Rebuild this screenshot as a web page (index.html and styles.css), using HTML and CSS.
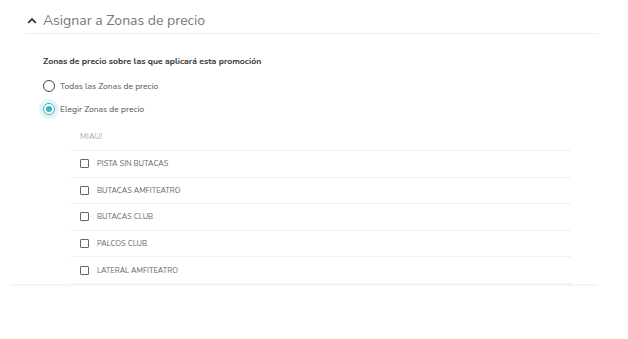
FILE: index.html
```html
<!DOCTYPE html>
<html lang="es">
<head>
    <meta charset="UTF-8">
    <title>Asignar a Zonas de precio</title>
    <link rel="stylesheet" href="styles.css">
</head>
<body>
    <div class="panel">
        <div class="panel-header">
            <svg class="chevron" width="10" height="7" viewBox="0 0 10 7">
                <path d="M1.2 5.8 L5 2 L8.8 5.8" fill="none" stroke="#333" stroke-width="1.8"/>
            </svg>
            <span class="panel-title">Asignar a Zonas de precio</span>
        </div>
        <div class="panel-body">
            <p class="question">Zonas de precio sobre las que aplicará esta promoción</p>
            <label class="radio-row">
                <span class="radio"></span>
                <span>Todas las Zonas de precio</span>
            </label>
            <label class="radio-row">
                <span class="radio checked"></span>
                <span>Elegir Zonas de precio</span>
            </label>
            <div class="zone-list">
                <div class="zone-group">MIAU!</div>
                <div class="zone-row"><span class="checkbox"></span>PISTA SIN BUTACAS</div>
                <div class="zone-row"><span class="checkbox"></span>BUTACAS AMFITEATRO</div>
                <div class="zone-row"><span class="checkbox"></span>BUTACAS CLUB</div>
                <div class="zone-row"><span class="checkbox"></span>PALCOS CLUB</div>
                <div class="zone-row"><span class="checkbox"></span>LATERAL AMFITEATRO</div>
            </div>
        </div>
    </div>
</body>
</html>
```

FILE: styles.css
```css
body {
    margin: 0;
    background: #fff;
    font-family: "Nunito", "Lato", "Noto Sans", sans-serif;
    color: #555;
}

.panel {
    margin: 0 30px 0 10px;
    border-bottom: 2px solid #f5f5f5;
}

.panel-header {
    display: flex;
    align-items: center;
    gap: 6px;
    box-sizing: border-box;
    height: 34px;
    padding: 8px 0 0 2px;
    margin-left: 15px;
    border-bottom: 1px solid #ededed;
}

.panel-title {
    font-size: 14px;
    color: #777;
}

.panel-body {
    padding: 21px 0 0 33px;
}

.question {
    margin: 0 0 7px;
    font-size: 8.7px;
    font-weight: bold;
    color: #333;
}

.radio-row {
    display: flex;
    align-items: center;
    gap: 5px;
    height: 23px;
    font-size: 8.5px;
    color: #555;
}

.radio {
    width: 10px;
    height: 10px;
    border: 1.4px solid #444;
    border-radius: 50%;
    position: relative;
}

.radio.checked {
    border-color: #3fb1c0;
    background: #fff;
    box-shadow: 0 0 0 4px #e3f4f6;
}

.radio.checked::after {
    content: "";
    position: absolute;
    left: 2px;
    top: 2px;
    width: 6px;
    height: 6px;
    border-radius: 50%;
    background: #3fb1c0;
}

.zone-list {
    margin: 6px 27px 0 27px;
}

.zone-group {
    height: 24px;
    padding-left: 10px;
    line-height: 22px;
    font-size: 8px;
    color: #aaa;
    border-bottom: 1px solid #f0f0f0;
}

.zone-row {
    display: flex;
    align-items: center;
    gap: 8px;
    box-sizing: border-box;
    height: 26.6px;
    padding-left: 10px;
    font-size: 7.5px;
    color: #666;
    border-bottom: 1px solid #f0f0f0;
}

.checkbox {
    width: 7px;
    height: 7px;
    border: 1.3px solid #666;
    border-radius: 1px;
}
```
